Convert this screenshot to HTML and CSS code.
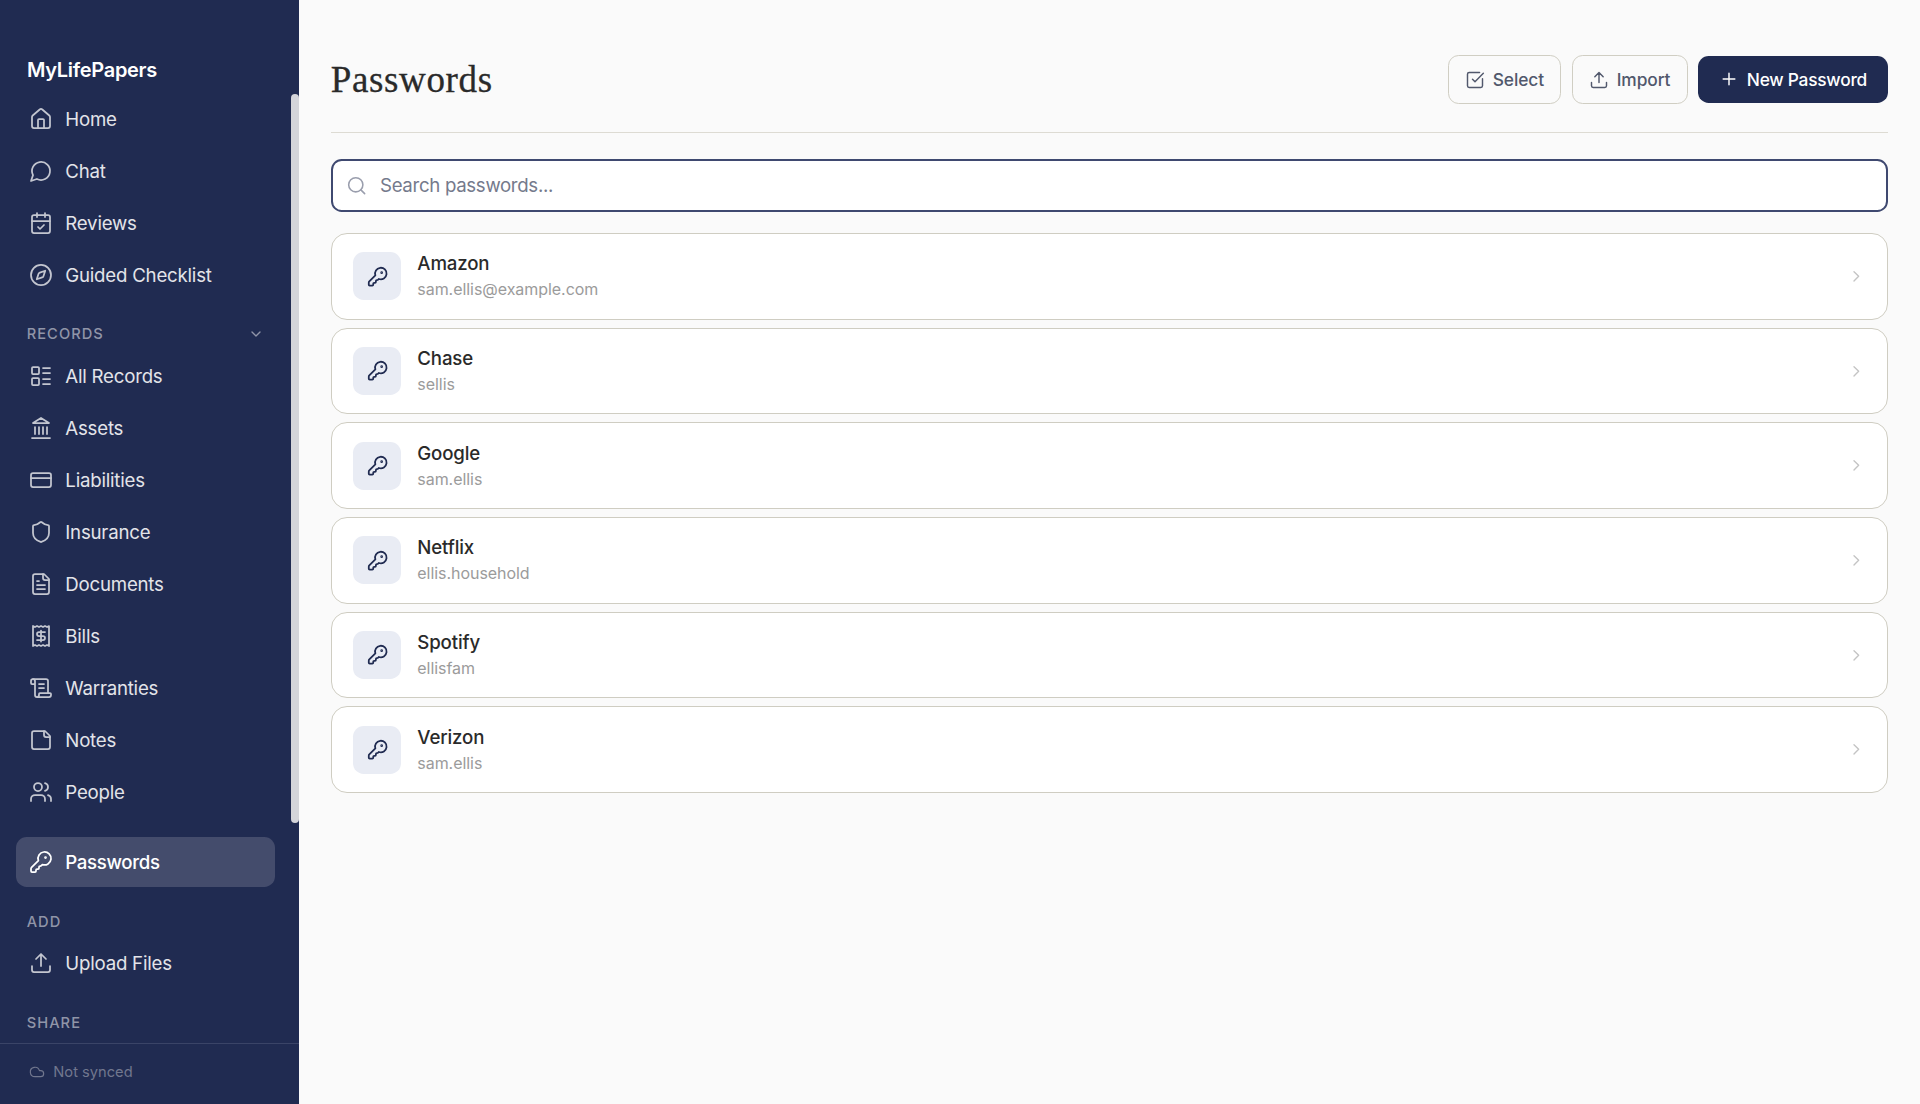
FILE: index.html
```html
<!DOCTYPE html>
<html lang="en">
<head>
<meta charset="UTF-8" />
<meta name="viewport" content="width=device-width, initial-scale=1" />
<title>Passwords - MyLifePapers</title>
<link rel="stylesheet" href="styles.css">
</head>
<body>

<!-- Icons -->
<svg class="sprite" aria-hidden="true">
  <symbol id="home" viewBox="0 0 24 24"><path d="M15 21v-8a1 1 0 0 0-1-1h-4a1 1 0 0 0-1 1v8" /><path d="M3 10a2 2 0 0 1 .709-1.528l7-5.999a2 2 0 0 1 2.582 0l7 5.999A2 2 0 0 1 21 10v9a2 2 0 0 1-2 2H5a2 2 0 0 1-2-2z" /></symbol>
  <symbol id="chat" viewBox="0 0 24 24"><path d="M7.9 20A9 9 0 1 0 4 16.1L2 22Z" /></symbol>
  <symbol id="calendar" viewBox="0 0 24 24"><path d="M8 2v4M16 2v4" /><rect width="18" height="18" x="3" y="4" rx="2" /><path d="M3 10h18M9 16l2 2 4-4" /></symbol>
  <symbol id="compass" viewBox="0 0 24 24"><path d="m16.24 7.76-1.804 5.411a2 2 0 0 1-1.265 1.265L7.76 16.24l1.804-5.411a2 2 0 0 1 1.265-1.265z" /><circle cx="12" cy="12" r="10" /></symbol>
  <symbol id="list" viewBox="0 0 24 24"><rect width="7" height="7" x="3" y="3" rx="1" /><rect width="7" height="7" x="3" y="14" rx="1" /><path d="M14 4h7M14 9h7M14 15h7M14 20h7" /></symbol>
  <symbol id="bank" viewBox="0 0 24 24"><path d="M3 22h18M6 18v-7M10 18v-7M14 18v-7M18 18v-7" /><path d="m12 2 8 5H4z" /></symbol>
  <symbol id="card" viewBox="0 0 24 24"><rect width="20" height="14" x="2" y="5" rx="2" /><path d="M2 10h20" /></symbol>
  <symbol id="shield" viewBox="0 0 24 24"><path d="M20 13c0 5-3.5 7.5-7.66 8.95a1 1 0 0 1-.67-.01C7.5 20.5 4 18 4 13V6a1 1 0 0 1 1-1c2 0 4.5-1.2 6.24-2.72a1.17 1.17 0 0 1 1.52 0C14.51 3.81 17 5 19 5a1 1 0 0 1 1 1z" /></symbol>
  <symbol id="file" viewBox="0 0 24 24"><path d="M15 2H6a2 2 0 0 0-2 2v16a2 2 0 0 0 2 2h12a2 2 0 0 0 2-2V7Z" /><path d="M14 2v4a2 2 0 0 0 2 2h4M10 9H8M16 13H8M16 17H8" /></symbol>
  <symbol id="receipt" viewBox="0 0 24 24"><path d="M4 2v20l2-1 2 1 2-1 2 1 2-1 2 1 2-1 2 1V2l-2 1-2-1-2 1-2-1-2 1-2-1-2 1Z" /><path d="M16 8h-6a2 2 0 1 0 0 4h4a2 2 0 1 1 0 4H8M12 17.5v-11" /></symbol>
  <symbol id="scroll" viewBox="0 0 24 24"><path d="M15 12h-5M15 8h-5M19 17V5a2 2 0 0 0-2-2H4" /><path d="M8 21h12a2 2 0 0 0 2-2v-1a1 1 0 0 0-1-1H11a1 1 0 0 0-1 1v1a2 2 0 1 1-4 0V5a2 2 0 1 0-4 0v2a1 1 0 0 0 1 1h3" /></symbol>
  <symbol id="note" viewBox="0 0 24 24"><path d="M16 3H5a2 2 0 0 0-2 2v14a2 2 0 0 0 2 2h14a2 2 0 0 0 2-2V8Z" /><path d="M15 3v4a2 2 0 0 0 2 2h4" /></symbol>
  <symbol id="users" viewBox="0 0 24 24"><path d="M16 21v-2a4 4 0 0 0-4-4H6a4 4 0 0 0-4 4v2" /><circle cx="9" cy="7" r="4" /><path d="M22 21v-2a4 4 0 0 0-3-3.87M16 3.13a4 4 0 0 1 0 7.75" /></symbol>
  <symbol id="key" viewBox="0 0 24 24"><path d="M2.586 17.414A2 2 0 0 0 2 18.828V21a1 1 0 0 0 1 1h3a1 1 0 0 0 1-1v-1a1 1 0 0 1 1-1h1a1 1 0 0 0 1-1v-1a1 1 0 0 1 1-1h.172a2 2 0 0 0 1.414-.586l.814-.814a6.5 6.5 0 1 0-4-4z" /><circle cx="16.5" cy="7.5" r=".5" fill="currentColor" /></symbol>
  <symbol id="upload" viewBox="0 0 24 24"><path d="M21 15v4a2 2 0 0 1-2 2H5a2 2 0 0 1-2-2v-4M17 8l-5-5-5 5M12 3v12" /></symbol>
  <symbol id="cloud" viewBox="0 0 24 24"><path d="M17.5 19H9a7 7 0 1 1 6.71-9h1.79a4.5 4.5 0 1 1 0 9Z" /></symbol>
  <symbol id="check" viewBox="0 0 24 24"><path d="M21 10.5V19a2 2 0 0 1-2 2H5a2 2 0 0 1-2-2V5a2 2 0 0 1 2-2h12.5M9 11l3 3L22 4" /></symbol>
  <symbol id="plus" viewBox="0 0 24 24"><path d="M5 12h14M12 5v14" /></symbol>
  <symbol id="search" viewBox="0 0 24 24"><circle cx="11" cy="11" r="8" /><path d="m21 21-4.3-4.3" /></symbol>
  <symbol id="down" viewBox="0 0 24 24"><path d="m6 9 6 6 6-6" /></symbol>
  <symbol id="right" viewBox="0 0 24 24"><path d="m9 18 6-6-6-6" /></symbol>
</svg>

<aside class="sidebar">
  <div class="brand">MyLifePapers</div>
  <nav class="nav">
    <a class="nav-item"><svg><use href="#home" /></svg><span>Home</span></a>
    <a class="nav-item"><svg><use href="#chat" /></svg><span>Chat</span></a>
    <a class="nav-item"><svg><use href="#calendar" /></svg><span>Reviews</span></a>
    <a class="nav-item"><svg><use href="#compass" /></svg><span>Guided Checklist</span></a>

    <div class="nav-label"><span>RECORDS</span><svg><use href="#down" /></svg></div>
    <a class="nav-item"><svg><use href="#list" /></svg><span>All Records</span></a>
    <a class="nav-item"><svg><use href="#bank" /></svg><span>Assets</span></a>
    <a class="nav-item"><svg><use href="#card" /></svg><span>Liabilities</span></a>
    <a class="nav-item"><svg><use href="#shield" /></svg><span>Insurance</span></a>
    <a class="nav-item"><svg><use href="#file" /></svg><span>Documents</span></a>
    <a class="nav-item"><svg><use href="#receipt" /></svg><span>Bills</span></a>
    <a class="nav-item"><svg><use href="#scroll" /></svg><span>Warranties</span></a>
    <a class="nav-item"><svg><use href="#note" /></svg><span>Notes</span></a>
    <a class="nav-item"><svg><use href="#users" /></svg><span>People</span></a>

    <a class="nav-item active"><svg><use href="#key" /></svg><span>Passwords</span></a>

    <div class="nav-label"><span>ADD</span></div>
    <a class="nav-item"><svg><use href="#upload" /></svg><span>Upload Files</span></a>

    <div class="nav-label"><span>SHARE</span></div>
  </nav>
  <div class="scroll-thumb"></div>
  <div class="sync"><svg><use href="#cloud" /></svg><span>Not synced</span></div>
</aside>

<main class="main">
  <header class="page-header">
    <h1>Passwords</h1>
    <div class="actions">
      <button class="btn"><svg><use href="#check" /></svg><span>Select</span></button>
      <button class="btn"><svg><use href="#upload" /></svg><span>Import</span></button>
      <button class="btn primary"><svg><use href="#plus" /></svg><span>New Password</span></button>
    </div>
  </header>

  <label class="search">
    <svg><use href="#search" /></svg>
    <input type="text" placeholder="Search passwords..." />
  </label>

  <div class="cards">
    <div class="card">
      <div class="card-icon"><svg><use href="#key" /></svg></div>
      <div class="card-text"><div class="name">Amazon</div><div class="user">sam.ellis@example.com</div></div>
      <svg class="chevron"><use href="#right" /></svg>
    </div>
    <div class="card">
      <div class="card-icon"><svg><use href="#key" /></svg></div>
      <div class="card-text"><div class="name">Chase</div><div class="user">sellis</div></div>
      <svg class="chevron"><use href="#right" /></svg>
    </div>
    <div class="card">
      <div class="card-icon"><svg><use href="#key" /></svg></div>
      <div class="card-text"><div class="name">Google</div><div class="user">sam.ellis</div></div>
      <svg class="chevron"><use href="#right" /></svg>
    </div>
    <div class="card">
      <div class="card-icon"><svg><use href="#key" /></svg></div>
      <div class="card-text"><div class="name">Netflix</div><div class="user">ellis.household</div></div>
      <svg class="chevron"><use href="#right" /></svg>
    </div>
    <div class="card">
      <div class="card-icon"><svg><use href="#key" /></svg></div>
      <div class="card-text"><div class="name">Spotify</div><div class="user">ellisfam</div></div>
      <svg class="chevron"><use href="#right" /></svg>
    </div>
    <div class="card">
      <div class="card-icon"><svg><use href="#key" /></svg></div>
      <div class="card-text"><div class="name">Verizon</div><div class="user">sam.ellis</div></div>
      <svg class="chevron"><use href="#right" /></svg>
    </div>
  </div>
</main>

</body>
</html>
```
FILE: styles.css
```css
* {
  box-sizing: border-box;
}
body {
  margin: 0;
  height: 100vh;
  display: flex;
  overflow: hidden;
  background: #fafafa;
  color: #2a2a2a;
  font-family: Inter, "Liberation Sans", sans-serif;
}
svg {
  flex: none;
  fill: none;
  stroke: currentColor;
  stroke-width: 1.75;
  stroke-linecap: round;
  stroke-linejoin: round;
}
.sprite {
  position: absolute;
  width: 0;
  height: 0;
}

/* Sidebar */
.sidebar {
  position: relative;
  flex: none;
  display: flex;
  flex-direction: column;
  width: 298.67px;
  background: #202b51;
}
.brand {
  height: 94px;
  padding: 58px 0 0 27px;
  color: #fff;
  font-size: 20px;
  font-weight: 600;
  line-height: 24px;
  letter-spacing: -0.3px;
}
.nav {
  flex: 1;
  min-height: 0;
  overflow: hidden;
  padding: 0 24px 0 16px;
}
.nav-item {
  display: flex;
  align-items: center;
  gap: 12.67px;
  height: 49.33px;
  margin-bottom: 2.67px;
  padding-left: 12.67px;
  border-radius: 10.67px;
  color: #e3e4e9;
  font-size: 18.67px;
  letter-spacing: -0.22px;
}
.nav-item span {
  padding-top: 1px;
}
.nav-item svg {
  width: 24px;
  height: 24px;
  color: #c3c6d0;
}
.nav-item.active {
  margin-top: 21px;
  background: #444c6c;
  color: #fff;
  font-weight: 500;
  letter-spacing: -0.35px;
}
.nav-item.active svg {
  color: #fff;
}
.nav-label {
  display: flex;
  align-items: center;
  justify-content: space-between;
  height: 18px;
  margin: 26.2px 10.67px 7.5px;
  color: #9095a8;
  font-size: 14.67px;
  font-weight: 500;
  letter-spacing: 1.05px;
}
.nav-label svg {
  width: 16px;
  height: 16px;
  stroke-width: 2;
}
.scroll-thumb {
  position: absolute;
  top: 94px;
  right: 0;
  width: 8px;
  height: 729px;
  border-radius: 4px;
  background: #d4d5da;
}
.sync {
  display: flex;
  align-items: center;
  gap: 8px;
  height: 61px;
  padding: 0 0 4px 29.33px;
  border-top: 1px solid #3a4467;
  color: #71778e;
  font-size: 14.67px;
}
.sync svg {
  width: 16px;
  height: 16px;
}

/* Main content */
.main {
  flex: 1;
  padding: 0 32px;
}
.page-header {
  display: flex;
  align-items: center;
  justify-content: space-between;
  height: 133px;
  padding-top: 27px;
  border-bottom: 1px solid #dddbd3;
}
h1 {
  margin: 0;
  font-family: Georgia, "Liberation Serif", serif;
  font-size: 37px;
  font-weight: 400;
  letter-spacing: 0.65px;
  -webkit-text-stroke: 0.3px;
}
.actions {
  display: flex;
  align-items: center;
  gap: 10.67px;
}
.btn {
  display: flex;
  align-items: center;
  gap: 7.5px;
  height: 49.67px;
  padding: 0 16.33px;
  border: 1px solid #d0cec3;
  border-radius: 10.67px;
  background: none;
  color: #51586c;
  font-family: inherit;
  font-size: 17.33px;
  font-weight: 500;
  letter-spacing: -0.1px;
}
.btn svg {
  width: 20px;
  height: 20px;
}
.btn.primary {
  height: 47.33px;
  padding: 0 21px;
  border: none;
  background: #202b51;
  color: #fff;
  letter-spacing: -0.25px;
}
.search {
  display: flex;
  align-items: center;
  gap: 12.5px;
  height: 53px;
  margin: 26px 0 21px;
  padding-left: 13.5px;
  border: 2px solid #3f4970;
  border-radius: 10.67px;
  background: #fff;
}
.search svg {
  width: 21.33px;
  height: 21.33px;
  color: #9a9ead;
}
.search input {
  flex: 1;
  padding: 0;
  border: none;
  outline: none;
  background: none;
  font-family: inherit;
  font-size: 18.67px;
  letter-spacing: -0.32px;
}
.search input::placeholder {
  color: #757a8c;
}

/* Password list */
.cards {
  display: flex;
  flex-direction: column;
  gap: 8px;
}
.card {
  display: flex;
  align-items: center;
  gap: 16px;
  height: 86.67px;
  padding: 0 21.67px;
  border: 1px solid #cfcdc2;
  border-radius: 16px;
  background: #fff;
}
.card-icon {
  display: flex;
  align-items: center;
  justify-content: center;
  width: 48px;
  height: 48px;
  border-radius: 10.67px;
  background: #e9ecf4;
  color: #202b51;
}
.card-icon svg {
  width: 21.33px;
  height: 21.33px;
  stroke-width: 2;
}
.card-text {
  flex: 1;
}
.name {
  font-size: 18.67px;
  font-weight: 500;
  line-height: 26px;
  letter-spacing: -0.15px;
}
.user {
  color: #9b9b9b;
  font-size: 16px;
  line-height: 24px;
  letter-spacing: -0.05px;
}
.chevron {
  width: 18.67px;
  height: 18.67px;
  color: #c4c4c4;
}
```
